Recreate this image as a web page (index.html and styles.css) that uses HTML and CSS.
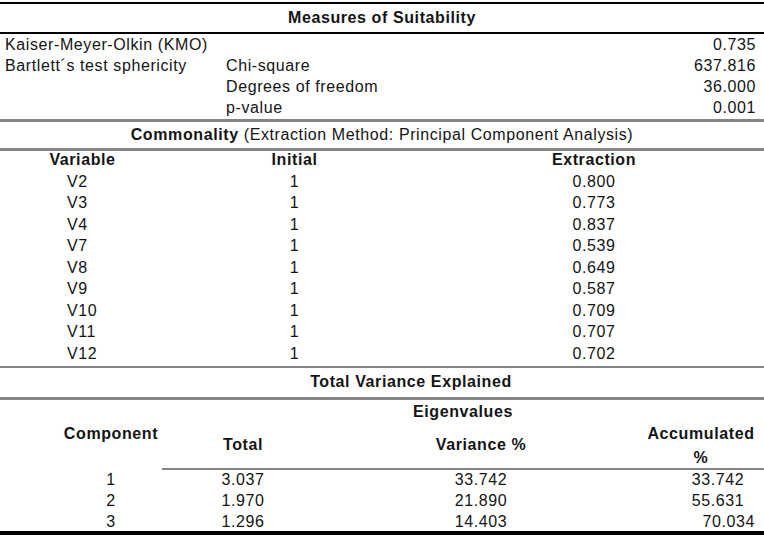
FILE: index.html
```html
<!DOCTYPE html>
<html lang="en">
<head>
<meta charset="utf-8">
<title>Factor analysis tables</title>
<link rel="stylesheet" href="styles.css">
</head>
<body>
<div class="sheet">
  <section class="suit">
    <div class="title suit-title">Measures of Suitability</div>
    <div class="suit-grid">
      <div>Kaiser-Meyer-Olkin (KMO)</div><div></div><div class="num">0.735</div>
      <div>Bartlett´s test sphericity</div><div>Chi-square</div><div class="num">637.816</div>
      <div></div><div>Degrees of freedom</div><div class="num">36.000</div>
      <div></div><div>p-value</div><div class="num">0.001</div>
    </div>
  </section>

  <section class="comm">
    <div class="comm-title"><b>Commonality</b> (Extraction Method: Principal Component Analysis)</div>
    <div class="comm-grid">
      <div class="hd var-hd">Variable</div><div class="hd ctr">Initial</div><div class="hd ctr">Extraction</div>
      <div class="var">V2</div><div class="ctr">1</div><div class="ctr">0.800</div>
      <div class="var">V3</div><div class="ctr">1</div><div class="ctr">0.773</div>
      <div class="var">V4</div><div class="ctr">1</div><div class="ctr">0.837</div>
      <div class="var">V7</div><div class="ctr">1</div><div class="ctr">0.539</div>
      <div class="var">V8</div><div class="ctr">1</div><div class="ctr">0.649</div>
      <div class="var">V9</div><div class="ctr">1</div><div class="ctr">0.587</div>
      <div class="var">V10</div><div class="ctr">1</div><div class="ctr">0.709</div>
      <div class="var">V11</div><div class="ctr">1</div><div class="ctr">0.707</div>
      <div class="var">V12</div><div class="ctr">1</div><div class="ctr">0.702</div>
    </div>
  </section>

  <section class="tve">
    <div class="tve-title">Total Variance Explained</div>
    <div class="tve-head">
      <div class="hd h-comp">Component</div>
      <div class="hd h-eig">Eigenvalues</div>
      <div class="hd h-total">Total</div>
      <div class="hd h-var">Variance %</div>
      <div class="hd h-acc">Accumulated<br>%</div>
    </div>
    <div class="tve-grid">
      <div class="d-comp">1</div><div class="ctr">3.037</div><div class="ctr">33.742</div><div class="d-acc">33.742</div>
      <div class="d-comp">2</div><div class="ctr">1.970</div><div class="ctr">21.890</div><div class="d-acc">55.631</div>
      <div class="d-comp">3</div><div class="ctr">1.296</div><div class="ctr">14.403</div><div class="d-acc-last">70.034</div>
    </div>
  </section>
</div>
</body>
</html>
```

FILE: styles.css
```css
html, body {
  margin: 0;
  padding: 0;
  background: #ffffff;
}

body {
  font-family: "Liberation Sans", Arial, sans-serif;
  font-size: 16px;
  letter-spacing: 0.6px;
  color: #141414;
}

.sheet {
  width: 764px;
  padding-top: 2px;
}

.hd {
  font-weight: bold;
}

.ctr {
  text-align: center;
}

/* ---------- Measures of Suitability ---------- */
.suit {
  border-top: 2px solid #000;
}

.suit-title {
  height: 28px;
  line-height: 28px;
  text-align: center;
  font-weight: bold;
  border-bottom: 2px solid #000;
}

.suit-grid {
  display: grid;
  grid-template-columns: 221px 1fr auto;
  grid-auto-rows: 21px;
  line-height: 18px;
  padding: 2px 8px 0 5px;
  height: 85px;
  box-sizing: border-box;
}

.num {
  text-align: right;
}

/* ---------- Commonality ---------- */
.comm {
  border-top: 3px solid #858585;
}

.comm-title {
  height: 26px;
  line-height: 26px;
  text-align: center;
  border-bottom: 3px solid #858585;
}

.comm-grid {
  display: grid;
  grid-template-columns: 165px 259px 340px;
  grid-auto-rows: 21.5px;
  line-height: 17px;
}

.var-hd {
  text-align: center;
}

.var {
  padding-left: 67px;
}

/* ---------- Total Variance Explained ---------- */
.tve {
  border-top: 2px solid #858585;
  border-bottom: 4px solid #000;
}

.tve-title {
  box-sizing: border-box;
  height: 32px;
  line-height: 28px;
  padding-left: 58px;
  text-align: center;
  font-weight: bold;
  border-bottom: 3px solid #858585;
}

.tve-head {
  display: grid;
  grid-template-columns: 162px 162px 314px 126px;
  grid-template-rows: 24px 46px;
  line-height: 18px;
  text-align: center;
}

.tve-head > div {
  box-sizing: border-box;
}

.h-comp {
  grid-column: 1;
  grid-row: 1 / 3;
  padding: 25px 0 0 60px;
}

.h-eig {
  grid-column: 2 / 5;
  grid-row: 1;
  padding-top: 3px;
}

.h-total {
  grid-column: 2;
  grid-row: 2;
  padding-top: 12px;
  border-bottom: 2px solid #858585;
}

.h-var {
  grid-column: 3;
  grid-row: 2;
  padding-top: 12px;
  border-bottom: 2px solid #858585;
}

.h-acc {
  grid-column: 4;
  grid-row: 1 / 3;
  line-height: 24px;
  padding-top: 22px;
  border-bottom: 2px solid #858585;
}

.tve-grid {
  display: grid;
  grid-template-columns: 162px 162px 314px 126px;
  grid-template-rows: 21px 21px 19px;
  line-height: 18px;
}

.tve-grid > div {
  padding-top: 1px;
}

.tve-grid > .d-comp {
  text-align: center;
  padding-left: 60px;
}

.tve-grid > .d-acc {
  text-align: center;
  padding-left: 34px;
}

.tve-grid > .d-acc-last {
  text-align: right;
  padding-right: 9px;
}
```
